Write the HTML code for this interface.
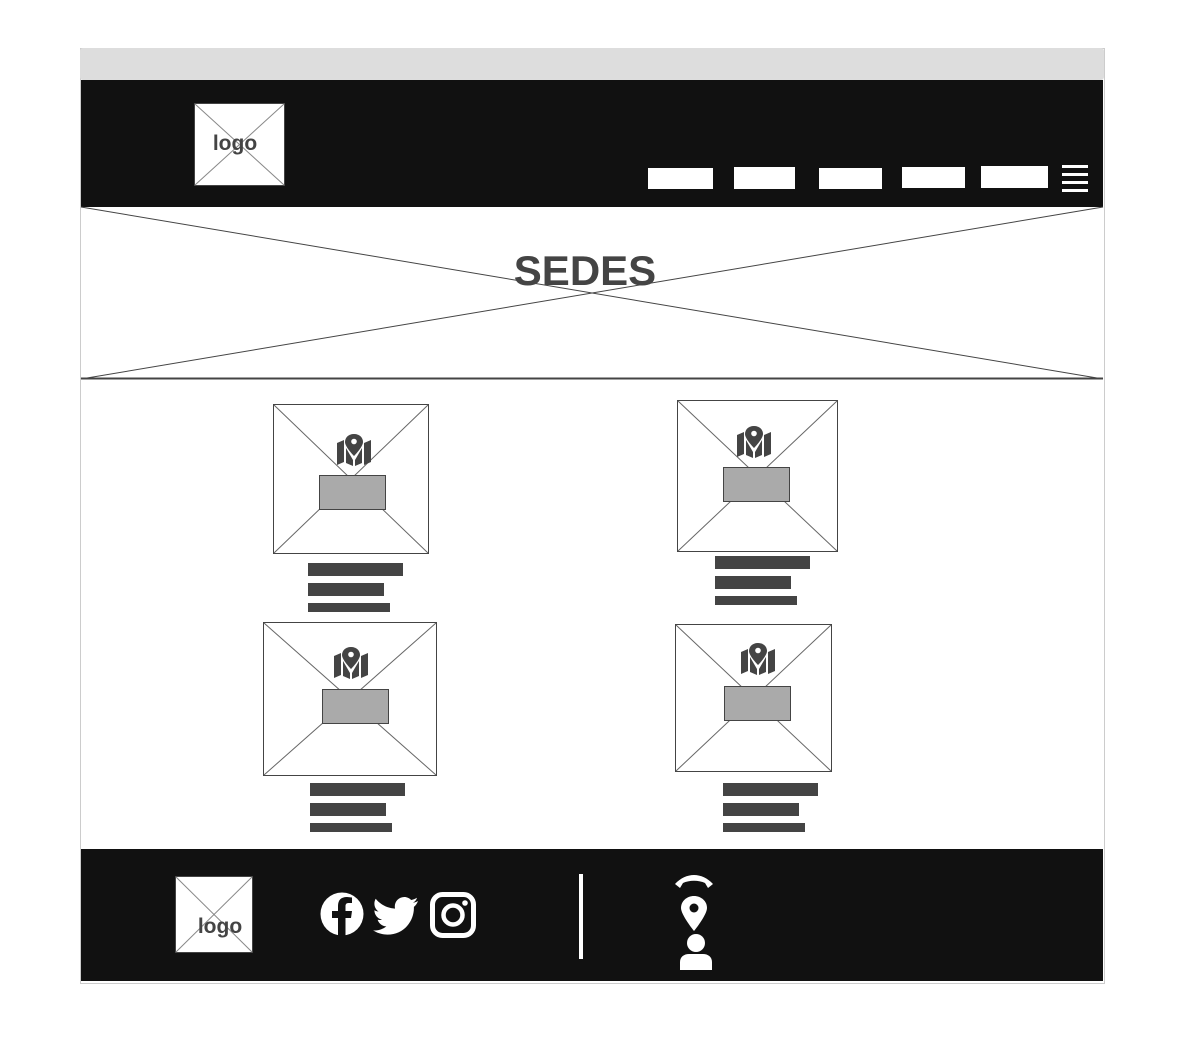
<!DOCTYPE html>
<html><head><meta charset="utf-8"><style>
html,body{margin:0;padding:0;background:#fff;}
svg{display:block;}
text{font-family:"Liberation Sans",sans-serif;font-weight:bold;fill:#444;}
</style></head><body>
<svg width="1184" height="1063" viewBox="0 0 1184 1063" xmlns="http://www.w3.org/2000/svg">
<defs>
<g id="map">
<path d="M1 9 L8 6 L8 28 L1 31 Z" fill="#444"/>
<path d="M28 9 L35 6 L35 28 L28 31 Z" fill="#444"/>
<path d="M10 14 L10 29 L17 32 L17 26 Z" fill="#444"/>
<path d="M26 14 L26 29 L19 32 L19 26 Z" fill="#444"/>
<path d="M18 0 C12 0 9 4 9 8 C9 13 18 22 18 22 C18 22 27 13 27 8 C27 4 24 0 18 0 Z" fill="#444"/>
<circle cx="18" cy="7.5" r="2.8" fill="#fff"/>
</g>
</defs>
<!-- frame -->
<rect x="80.5" y="48.5" width="1024" height="935" fill="#fff" stroke="#ccc"/>
<rect x="80" y="48" width="1024" height="32" fill="#ddd" rx="3"/>
<!-- header -->
<rect x="81" y="80" width="1022" height="127" fill="#111"/>
<rect x="194.5" y="103.5" width="90" height="82" fill="#fff" stroke="#444"/>
<line x1="195" y1="104" x2="284" y2="185" stroke="#888"/><line x1="284" y1="104" x2="195" y2="185" stroke="#888"/>
<text x="235" y="150" font-size="21" text-anchor="middle">logo</text>
<rect x="648" y="168" width="65" height="21" fill="#fff"/>
<rect x="734" y="167" width="61" height="22" fill="#fff"/>
<rect x="819" y="168" width="63" height="21" fill="#fff"/>
<rect x="902" y="167" width="63" height="21" fill="#fff"/>
<rect x="981" y="166" width="67" height="22" fill="#fff"/>
<rect x="1062" y="165" width="26" height="3" fill="#fff"/>
<rect x="1062" y="173" width="26" height="3" fill="#fff"/>
<rect x="1062" y="181" width="26" height="3" fill="#fff"/>
<rect x="1062" y="189" width="26" height="3" fill="#fff"/>
<!-- hero -->
<rect x="81" y="207" width="1022" height="172" fill="#fff"/>
<line x1="81" y1="207" x2="1103" y2="379" stroke="#444"/><line x1="1103" y1="207" x2="81" y2="379" stroke="#444"/>
<line x1="81" y1="378.5" x2="1103" y2="378.5" stroke="#444" stroke-width="2"/>
<text x="585" y="285" font-size="42" text-anchor="middle">SEDES</text>
<!-- cards -->
<g>
<rect x="273.5" y="404.5" width="155" height="149" fill="#fff" stroke="#444"/>
<line x1="274" y1="405" x2="428" y2="553" stroke="#666"/><line x1="428" y1="405" x2="274" y2="553" stroke="#666"/>
<use href="#map" x="336" y="434"/>
<rect x="319.5" y="475.5" width="66" height="34" fill="#aaa" stroke="#444"/>
<rect x="308" y="563" width="95" height="13" fill="#444"/><rect x="308" y="583" width="76" height="13" fill="#444"/><rect x="308" y="603" width="82" height="9" fill="#444"/>
</g>
<g>
<rect x="677.5" y="400.5" width="160" height="151" fill="#fff" stroke="#444"/>
<line x1="678" y1="401" x2="837" y2="551" stroke="#666"/><line x1="837" y1="401" x2="678" y2="551" stroke="#666"/>
<use href="#map" x="736" y="426"/>
<rect x="723.5" y="467.5" width="66" height="34" fill="#aaa" stroke="#444"/>
<rect x="715" y="556" width="95" height="13" fill="#444"/><rect x="715" y="576" width="76" height="13" fill="#444"/><rect x="715" y="596" width="82" height="9" fill="#444"/>
</g>
<g>
<rect x="263.5" y="622.5" width="173" height="153" fill="#fff" stroke="#444"/>
<line x1="264" y1="623" x2="436" y2="775" stroke="#666"/><line x1="436" y1="623" x2="264" y2="775" stroke="#666"/>
<use href="#map" x="333" y="647"/>
<rect x="322.5" y="689.5" width="66" height="34" fill="#aaa" stroke="#444"/>
<rect x="310" y="783" width="95" height="13" fill="#444"/><rect x="310" y="803" width="76" height="13" fill="#444"/><rect x="310" y="823" width="82" height="9" fill="#444"/>
</g>
<g>
<rect x="675.5" y="624.5" width="156" height="147" fill="#fff" stroke="#444"/>
<line x1="676" y1="625" x2="831" y2="771" stroke="#666"/><line x1="831" y1="625" x2="676" y2="771" stroke="#666"/>
<use href="#map" x="740" y="643"/>
<rect x="724.5" y="686.5" width="66" height="34" fill="#aaa" stroke="#444"/>
<rect x="723" y="783" width="95" height="13" fill="#444"/><rect x="723" y="803" width="76" height="13" fill="#444"/><rect x="723" y="823" width="82" height="9" fill="#444"/>
</g>
<!-- footer -->
<rect x="81" y="849" width="1022" height="132" fill="#111"/>
<rect x="175.5" y="876.5" width="77" height="76" fill="#fff" stroke="#444"/>
<line x1="176" y1="877" x2="252" y2="952" stroke="#888"/><line x1="252" y1="877" x2="176" y2="952" stroke="#888"/>
<text x="220" y="933" font-size="21" text-anchor="middle">logo</text>
<!-- facebook -->
<circle cx="342" cy="914" r="21.5" fill="#fff"/>
<path d="M338 936 L338 918 L332 918 L332 911 L338 911 L338 906 C338 900 341 897 347 897 L352 897.5 L352 903 L348.5 903 C346 903 345.5 904.5 345.5 906.5 L345.5 911 L352 911 L351 918 L345.5 918 L345.5 936 Z" fill="#111"/>
<!-- twitter -->
<path d="M418 901 C416.5 902 414.5 902.5 413 902.8 C415 901.5 416.5 899.8 417 897.7 C415.2 898.8 413.3 899.5 411.2 900 C409.4 898.2 407 897 404.3 897 C399 897 394.8 901.2 394.8 906.4 C394.8 907.2 394.9 907.9 395 908.6 C387.2 908.2 380.3 904.5 375.7 898.8 C374.9 900.2 374.4 901.8 374.4 903.6 C374.4 906.9 376 909.8 378.6 911.5 C377.1 911.5 375.6 911 374.4 910.3 C374.4 915 377.7 918.8 382 919.7 C380.6 920.1 379 920.1 377.6 919.8 C378.8 923.6 382.3 926.3 386.4 926.4 C382.6 929.4 377.7 930.9 373 930.4 C377.2 933 382.1 934.6 387.4 934.6 C404.6 934.6 413.9 920.4 413.9 908.1 L413.9 906.9 C415.7 905.3 417 903.8 418 901 Z" fill="#fff"/>
<!-- instagram -->
<rect x="432.5" y="894.5" width="41" height="41" rx="10" fill="none" stroke="#fff" stroke-width="5"/>
<circle cx="453" cy="915" r="9.5" fill="none" stroke="#fff" stroke-width="4.5"/>
<circle cx="465" cy="903" r="2.8" fill="#fff"/>
<!-- divider -->
<rect x="579" y="874" width="4" height="85" fill="#fff"/>
<!-- phone -->
<path d="M675 884 C686 872 702 872 713 884 L708 888 L705 883 C699 880 689 880 683 883 L680 888 Z" fill="#fff"/>
<!-- pin -->
<path d="M694 896 C687 896 681 901 681 908 C681 915 694 931 694 931 C694 931 707 915 707 908 C707 901 701 896 694 896 Z" fill="#fff"/>
<circle cx="694" cy="908" r="4.5" fill="#111"/>
<!-- person -->
<circle cx="696" cy="943" r="9" fill="#fff"/>
<path d="M680 970 L680 962 C680 957 684 954 689 954 L703 954 C708 954 712 957 712 962 L712 970 Z" fill="#fff"/>
</svg>
</body></html>
